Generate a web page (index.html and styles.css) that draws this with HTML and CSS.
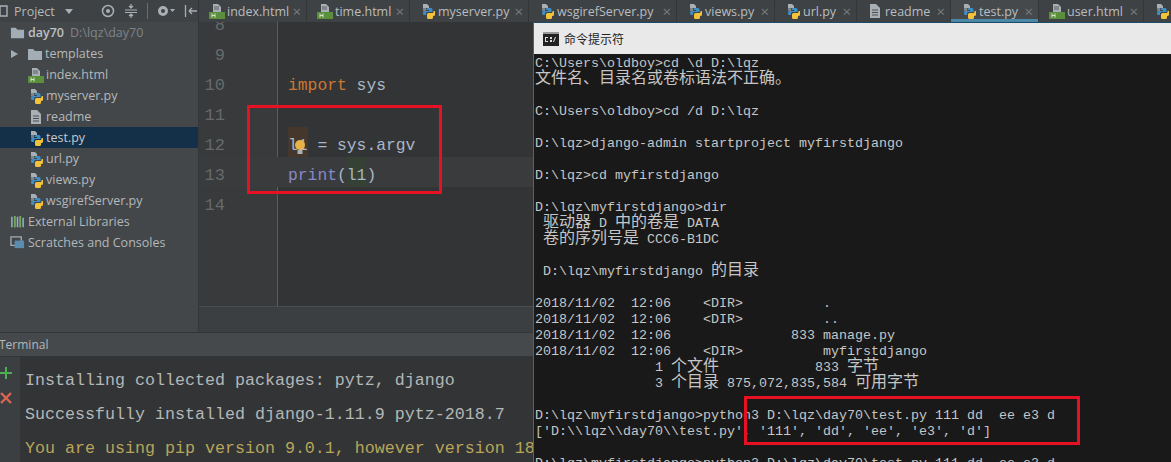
FILE: index.html
```html
<!DOCTYPE html>
<html lang="zh">
<head>
<meta charset="utf-8">
<title>PyCharm and cmd</title>
<link rel="stylesheet" href="styles.css">
</head>
<body>
<svg class="defs" width="0" height="0">
  <symbol id="py" viewBox="0 0 16 16">
    <path d="M3 1h4l2 2v2H3z" fill="#a9b0b5"/>
    <path d="M3 5h3v3H3z" fill="#a9b0b5" opacity=".6"/>
    <path d="M8 5h3a1.500 1.500 0 0 1 1.500 1.500V9H7.500a1.500 1.500 0 0 0-1.500 1.500V12H4.500A1.500 1.500 0 0 1 3 10.500V9.500A1.500 1.500 0 0 1 4.500 8H9V7H6.500V6.500A1.500 1.500 0 0 1 8 5z" fill="#3e8ec4"/>
    <path d="M13.500 8H15v3.500a1.500 1.500 0 0 1-1.500 1.500H13v1.500a1.500 1.500 0 0 1-1.500 1.500h-3A1.500 1.500 0 0 1 7 14.500V11.500A1.500 1.500 0 0 1 8.500 10H12a1.500 1.500 0 0 0 1.500-2z" fill="#f2c23a"/>
  </symbol>
  <symbol id="html" viewBox="0 0 16 16">
    <path d="M4 1h5l3 3v5H4z" fill="#a9b0b5"/>
    <path d="M5 4h5M5 6h5" stroke="#5a5f62" stroke-width="1"/>
    <rect x="0" y="9" width="16" height="7" fill="#5a8f3c"/>
    <path d="M3 10.500v4M6 10.500v4M3 12.500h3" stroke="#d8e6c8" stroke-width="1" fill="none"/>
  </symbol>
  <symbol id="txt" viewBox="0 0 16 16">
    <path d="M3 1h6l4 4v10H3z" fill="#a9b0b5"/>
    <path d="M5 7h6M5 9.500h6M5 12h6" stroke="#4a4e51" stroke-width="1"/>
  </symbol>
  <symbol id="folder" viewBox="0 0 16 16">
    <path d="M1 3h5l2 2h7v9H1z" fill="#a3adb5"/>
  </symbol>
  <symbol id="libs" viewBox="0 0 16 16">
    <path d="M2 3v11M5 2v12M8 3v11M11 2v12M14 4v10" stroke="#8fb7c9" stroke-width="1.600"/>
    <path d="M5 2v12M11 2v12" stroke="#77a65a" stroke-width="1.600"/>
  </symbol>
  <symbol id="scratch" viewBox="0 0 16 16">
    <path d="M1 2h11v9H1z" fill="none" stroke="#a3adb5" stroke-width="1.400"/>
    <path d="M5 6h10v8H5z" fill="#5b8db0"/>
  </symbol>
</svg>

<header class="topbar">
  <div class="project-head">
    <svg class="head-ico first" width="14" height="16" viewBox="0 0 14 16"><path d="M1 3h10v10H1zM4 3v10" fill="none" stroke="#a9b0b5" stroke-width="1.400"/></svg>
    <span class="project-label">Project</span>
    <svg class="caret" width="8" height="5" viewBox="0 0 8 5"><path d="M0 0h8L4 5z" fill="#a9b0b5"/></svg>
    <svg class="head-ico target" width="14" height="14" viewBox="0 0 14 14"><circle cx="7" cy="7" r="5.500" fill="none" stroke="#a9b0b5" stroke-width="1.500"/><circle cx="7" cy="7" r="2" fill="#a9b0b5"/></svg>
    <svg class="head-ico" width="14" height="16" viewBox="0 0 14 16"><path d="M1 7h12M1 9.500h12M7 1v4M7 11v4M5 3l2 2 2-2M5 13l2-2 2 2" fill="none" stroke="#a9b0b5" stroke-width="1.200"/></svg>
    <span class="head-sep"></span>
    <svg class="head-ico" width="18" height="14" viewBox="0 0 18 14"><circle cx="6" cy="7" r="3.500" fill="none" stroke="#a9b0b5" stroke-width="3"/><path d="M13 5h5l-2.500 3z" fill="#a9b0b5"/></svg>
    <svg class="head-ico" width="14" height="14" viewBox="0 0 14 14"><path d="M1.500 1v12M5 7h8M5 7l3-3M5 7l3 3" fill="none" stroke="#a9b0b5" stroke-width="1.300"/></svg>
  </div>
  <nav class="tabs">
    <div class="tab w-index"><svg class="ico"><use href="#html"/></svg><span class="tab-name">index.html</span><span class="x">×</span></div>
    <div class="tab w-time"><svg class="ico"><use href="#html"/></svg><span class="tab-name">time.html</span><span class="x">×</span></div>
    <div class="tab w-myserver"><svg class="ico"><use href="#py"/></svg><span class="tab-name">myserver.py</span><span class="x">×</span></div>
    <div class="tab w-wsgi"><svg class="ico"><use href="#py"/></svg><span class="tab-name">wsgirefServer.py</span><span class="x">×</span></div>
    <div class="tab w-views"><svg class="ico"><use href="#py"/></svg><span class="tab-name">views.py</span><span class="x">×</span></div>
    <div class="tab w-url"><svg class="ico"><use href="#py"/></svg><span class="tab-name">url.py</span><span class="x">×</span></div>
    <div class="tab w-readme"><svg class="ico"><use href="#txt"/></svg><span class="tab-name">readme</span><span class="x">×</span></div>
    <div class="tab w-test active"><svg class="ico"><use href="#py"/></svg><span class="tab-name">test.py</span><span class="x">×</span></div>
    <div class="tab w-user"><svg class="ico"><use href="#html"/></svg><span class="tab-name">user.html</span><span class="x">×</span></div>
    <div class="tab"><svg class="ico"><use href="#py"/></svg></div>
  </nav>
</header>

<div class="workspace">
  <div class="ide">
    <div class="ide-main">
      <aside class="tree">
        <div class="row root"><svg class="ico-root"><use href="#folder"/></svg><b class="root-name">day70</b><span class="path">D:\lqz\day70</span></div>
        <div class="row l1"><span class="arrow"></span><svg class="ico"><use href="#folder"/></svg><span>templates</span></div>
        <div class="row l2"><svg class="ico"><use href="#html"/></svg><span>index.html</span></div>
        <div class="row l2"><svg class="ico"><use href="#py"/></svg><span>myserver.py</span></div>
        <div class="row l2"><svg class="ico"><use href="#txt"/></svg><span>readme</span></div>
        <div class="row l2 selected"><svg class="ico"><use href="#py"/></svg><span>test.py</span></div>
        <div class="row l2"><svg class="ico"><use href="#py"/></svg><span>url.py</span></div>
        <div class="row l2"><svg class="ico"><use href="#py"/></svg><span>views.py</span></div>
        <div class="row l2"><svg class="ico"><use href="#py"/></svg><span>wsgirefServer.py</span></div>
        <div class="row l0"><svg class="ico-lib"><use href="#libs"/></svg><span>External Libraries</span></div>
        <div class="row l0"><svg class="ico-lib"><use href="#scratch"/></svg><span>Scratches and Consoles</span></div>
      </aside>
      <section class="editor">
        <div class="code-area">
          <div class="code">
            <div class="line"><span class="num">8</span><span class="src"></span></div>
            <div class="line"><span class="num">9</span><span class="src"></span></div>
            <div class="line"><span class="num">10</span><span class="src"><span class="kw">import</span> sys</span></div>
            <div class="line"><span class="num">11</span><span class="src"></span></div>
            <div class="line"><span class="num">12</span><span class="src"><span class="hl-warn">l1<svg class="bulb" width="12" height="16" viewBox="0 0 12 16"><circle cx="6" cy="6" r="5" fill="#e8b24a"/><rect x="3.500" y="11" width="5" height="4" fill="#a9b0b5"/></svg></span> = sys.argv</span></div>
            <div class="line current"><span class="num">13</span><span class="src"><span class="builtin">print</span>(<span class="hl-ref">l1</span>)</span></div>
            <div class="line"><span class="num">14</span><span class="src"></span></div>
          </div>
          <div class="redbox box-editor"></div>
        </div>
        <div class="h-scroll"></div>
      </section>
    </div>
    <div class="term-head"><span>Terminal</span></div>
    <div class="term">
      <div class="term-tools">
        <svg width="12" height="12" viewBox="0 0 12 12"><path d="M6 0v12M0 6h12" stroke="#4caf50" stroke-width="2"/></svg>
        <svg width="12" height="12" viewBox="0 0 12 12"><path d="M1 1l10 10M11 1L1 11" stroke="#d9654f" stroke-width="2.400"/></svg>
      </div>
      <div class="term-out">
        <div class="term-line">Installing collected packages: pytz, django</div>
        <div class="term-line">Successfully installed django-1.11.9 pytz-2018.7</div>
        <div class="term-line warn">You are using pip version 9.0.1, however version 18.1 is available.</div>
      </div>
    </div>
  </div>

  <div class="cmd">
    <div class="cmd-title">
      <svg class="cmd-ico" width="16" height="14" viewBox="0 0 16 14"><rect width="16" height="14" fill="#222"/><rect y="0" width="16" height="2" fill="#999"/><path d="M2 5h3v1H3v3h2v1H2zM7 5h2v2H7zM7 8h2v2H7zM10 10l2-5h1l-2 5z" fill="#ddd"/></svg>
      <span class="cmd-name">命令提示符</span>
    </div>
    <div class="cmd-body">
      <div class="cl">C:\Users\oldboy&gt;cd \d D:\lqz</div>
      <div class="cl"><span class="c">文件名、目录名或卷标语法不正确。</span></div>
      <div class="cl"></div>
      <div class="cl">C:\Users\oldboy&gt;cd /d D:\lqz</div>
      <div class="cl"></div>
      <div class="cl">D:\lqz&gt;django-admin startproject myfirstdjango</div>
      <div class="cl"></div>
      <div class="cl">D:\lqz&gt;cd myfirstdjango</div>
      <div class="cl"></div>
      <div class="cl">D:\lqz\myfirstdjango&gt;dir</div>
      <div class="cl"> <span class="c">驱动器</span> D <span class="c">中的卷是</span> DATA</div>
      <div class="cl"> <span class="c">卷的序列号是</span> CCC6-B1DC</div>
      <div class="cl"></div>
      <div class="cl"> D:\lqz\myfirstdjango <span class="c">的目录</span></div>
      <div class="cl"></div>
      <div class="cl">2018/11/02  12:06    &lt;DIR&gt;          .</div>
      <div class="cl">2018/11/02  12:06    &lt;DIR&gt;          ..</div>
      <div class="cl">2018/11/02  12:06               833 manage.py</div>
      <div class="cl">2018/11/02  12:06    &lt;DIR&gt;          myfirstdjango</div>
      <div class="cl">               1 <span class="c">个文件</span>            833 <span class="c">字节</span></div>
      <div class="cl">               3 <span class="c">个目录</span> 875,072,835,584 <span class="c">可用字节</span></div>
      <div class="cl"></div>
      <div class="cl">D:\lqz\myfirstdjango&gt;python3 D:\lqz\day70\test.py 111 dd  ee e3 d</div>
      <div class="cl">['D:\\lqz\\day70\\test.py', '111', 'dd', 'ee', 'e3', 'd']</div>
      <div class="cl"></div>
      <div class="cl">D:\lqz\myfirstdjango&gt;python3 D:\lqz\day70\test.py 111 dd  ee e3 d</div>
    </div>
    <div class="redbox box-cmd"></div>
  </div>
</div>
</body>
</html>
```
FILE: styles.css
```css
* { box-sizing: border-box; }
html, body { margin: 0; height: 100%; }
body {
  width: 1171px;
  height: 462px;
  overflow: hidden;
  display: flex;
  flex-direction: column;
  background: #3c3f41;
  font-family: "Open Sans", "Noto Sans", sans-serif;
  color: #b4b8bb;
}
.defs { position: absolute; }

.topbar {
  flex: 0 0 22px;
  display: flex;
  background: #3e4244;
  overflow: hidden;
  font-size: 12.500px;
  white-space: nowrap;
}
.project-head {
  flex: 0 0 199px;
  display: flex;
  align-items: center;
  gap: 9px;
  border-right: 1px solid #34373a;
}
.head-ico.first { margin-left: -4px; margin-right: -5px; }
.head-ico.target { margin-left: 19px; }
.head-sep { width: 1px; height: 16px; background: #6a6e71; }
.project-label { color: #b4b8bb; }
.caret { margin-left: 1px; }

.tabs { flex: 1; display: flex; min-width: 0; }
.tab {
  display: flex;
  align-items: center;
  padding-left: 10px;
  border-right: 1px solid #34373a;
  color: #b9bdc0;
  flex: none;
}
.tab .ico { margin-right: 2px; }
.tab .tab-name { flex: 1; }
.tab .x { color: #777b7e; font-size: 15px; margin-right: 5px; }
.tab.active { background: #45494c; box-shadow: inset 0 -3px 0 #4a88a8; }
.w-index { width: 108px; }
.w-time { width: 103px; }
.w-myserver { width: 119px; }
.w-wsgi { width: 148px; }
.w-views { width: 98px; }
.w-url { width: 82px; }
.w-readme { width: 94px; }
.w-test { width: 88px; }
.w-user { width: 105px; }
.ico { width: 16px; height: 16px; flex: none; }

.workspace { flex: 1; display: flex; min-height: 0; }
.ide { flex: 0 0 533px; display: flex; flex-direction: column; min-width: 0; }
.ide-main { flex: 0 0 310px; display: flex; min-height: 0; }

.tree {
  flex: 0 0 199px;
  background: #43474a;
  border-right: 1px solid #34373a;
  font-size: 12.500px;
  color: #b4b8bb;
  overflow: hidden;
}
.row { height: 21px; display: flex; align-items: center; white-space: nowrap; }
.row .ico { margin-right: 2px; }
.root { padding-left: 10px; }
.ico-root { width: 15px; height: 15px; margin-right: 3px; flex: none; }
.root-name { font-weight: 600; color: #bcc0c3; margin-right: 6px; }
.path { color: #7f8487; }
.l1 { padding-left: 11px; }
.arrow {
  width: 0; height: 0; margin-right: 9px;
  border-left: 7px solid #a3adb5;
  border-top: 4.500px solid transparent;
  border-bottom: 4.500px solid transparent;
}
.l2 { padding-left: 28px; }
.selected { background: #143049; color: #c5c9cc; }
.l0 { padding-left: 10px; }
.ico-lib { width: 15px; height: 15px; margin-right: 3px; flex: none; }

.editor { flex: 1; display: flex; flex-direction: column; background: #3c3f41; min-width: 0; }
.code-area {
  position: relative;
  flex: 0 0 285px;
  overflow: hidden;
  background: linear-gradient(to right, #383a3c 78px, #5a5d5f 78px, #5a5d5f 79px, #333436 79px);
  border-bottom: 1px solid #4a4d4f;
}
.code { margin-top: -15px; font-family: "Liberation Mono", monospace; font-size: 16.330px; }
.line { height: 30px; line-height: 38px; display: flex; align-items: flex-start; color: #a9b7c6; white-space: pre; }
.current { background: #3a3b3d; }
.num { flex: 0 0 26px; text-align: right; color: #666a6c; font-size: 17px; }
.src { margin-left: 63px; }
.kw { color: #cc7832; }
.builtin { color: #8888c6; }
.hl-warn { background: #46372d; position: relative; display: inline-block; height: 30px; vertical-align: top; }
.hl-ref { background: #344134; display: inline-block; height: 30px; vertical-align: top; }
.bulb { position: absolute; left: 6px; top: 12px; }
.h-scroll { flex: 1; background: #3c3f41; }

.term-head {
  flex: 0 0 25px;
  display: flex;
  align-items: center;
  background: #45494c;
  border-top: 1px solid #323436;
  border-bottom: 1px solid #323436;
  font-size: 12px;
  margin-left: -1px;
}
.term { flex: 1; display: flex; min-height: 0; overflow: hidden; background: #333436; }
.term-tools {
  flex: 0 0 20px;
  background: #3c3f41;
  display: flex;
  flex-direction: column;
  align-items: flex-start;
  gap: 13px;
  padding-top: 10px;
  overflow: hidden;
}
.term-out {
  margin-left: 5px;
  padding-top: 7px;
  font-family: "Liberation Mono", monospace;
  font-size: 16.670px;
  color: #b3b7b6;
  white-space: nowrap;
  overflow: hidden;
}
.term-line { height: 34px; line-height: 34px; }
.warn { color: #b8a55a; }

.cmd {
  flex: 1;
  position: relative;
  min-width: 0;
  background: #191919;
  border-left: 1px solid #2b6f9e;
  border-top: 1px solid #1c4a66;
  overflow: hidden;
  display: flex;
  flex-direction: column;
}
.cmd-title {
  flex: 0 0 31px;
  display: flex;
  align-items: center;
  gap: 5px;
  padding-left: 9px;
  background: #e9e9e9;
  color: #222;
  font-family: "Noto Sans CJK SC", sans-serif;
  font-size: 12px;
}
.cmd-body {
  padding-left: 1px;
  font-family: "Liberation Mono", monospace;
  font-size: 13.330px;
  color: #c6c6c6;
}
.cl { height: 16px; line-height: 20px; white-space: pre; }
.c { font-family: "Noto Sans CJK SC", sans-serif; font-size: 16px; line-height: 0; }

.redbox { position: absolute; border: 3px solid #e81123; pointer-events: none; }
.box-editor { left: 48px; top: 83px; width: 195px; height: 89px; }
.box-cmd { left: 210px; top: 373px; width: 336px; height: 49px; }
```
